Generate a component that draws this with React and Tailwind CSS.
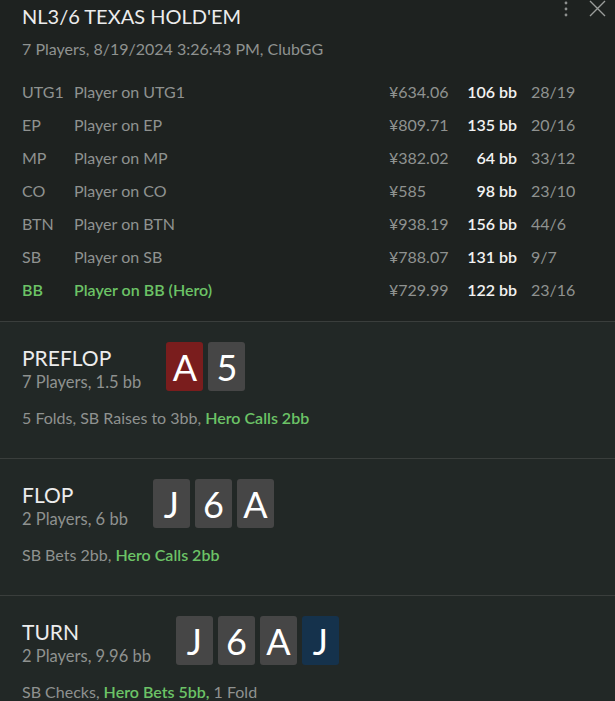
import React from "react";

const players = [
  { pos: "UTG1", name: "Player on UTG1", money: "¥634.06", bb: "106 bb", stats: "28/19" },
  { pos: "EP", name: "Player on EP", money: "¥809.71", bb: "135 bb", stats: "20/16" },
  { pos: "MP", name: "Player on MP", money: "¥382.02", bb: "64 bb", stats: "33/12" },
  { pos: "CO", name: "Player on CO", money: "¥585", bb: "98 bb", stats: "23/10" },
  { pos: "BTN", name: "Player on BTN", money: "¥938.19", bb: "156 bb", stats: "44/6" },
  { pos: "SB", name: "Player on SB", money: "¥788.07", bb: "131 bb", stats: "9/7" },
  { pos: "BB", name: "Player on BB (Hero)", money: "¥729.99", bb: "122 bb", stats: "23/16", hero: true },
];

const cardColors = {
  gray: "bg-[#464646]",
  red: "bg-[#7a1d1d]",
  blue: "bg-[#15324c]",
};

const Card = ({ rank, color = "gray" }) => (
  <div
    className={`${cardColors[color]} w-[37px] h-[49px] rounded-[3px] flex items-center justify-center text-[36px] text-white leading-none`}
  >
    {rank}
  </div>
);

const Street = ({ title, sub, cards, children }) => (
  <div className="border-t border-[#3a3e3c] bg-[#222826] h-[137px] px-[22px]">
    <div className="flex items-start gap-[25px] pt-[20px]">
      <div className="pt-[4px]">
        <div className="text-[21px] leading-[24px] text-[#ececec]">{title}</div>
        <div className="mt-[1px] text-[16.5px] leading-[22px] text-[#8f9290]">{sub}</div>
      </div>
      <div className="flex gap-[5px]">
        {cards.map((c, i) => (
          <Card key={i} rank={c.rank} color={c.color} />
        ))}
      </div>
    </div>
    <div className="mt-[14px] text-[16px] leading-[22px] text-[#8f9290]">{children}</div>
  </div>
);

const Hero = ({ children }) => (
  <span className="text-[#6cc366] font-semibold">{children}</span>
);

export default function App() {
  return (
    <div
      className="w-[615px] h-[701px] overflow-hidden bg-[#1e2220] relative"
      style={{ fontFamily: "Lato, 'Noto Sans', sans-serif" }}
    >
      <div className="absolute top-0 right-[9px] flex items-start gap-[20px]">
        <svg width="6" height="18" viewBox="0 0 6 18">
          <circle cx="3" cy="3" r="1.4" fill="#8d908e" />
          <circle cx="3" cy="9" r="1.4" fill="#8d908e" />
          <circle cx="3" cy="15" r="1.4" fill="#8d908e" />
        </svg>
        <svg width="17" height="18" viewBox="0 0 17 18">
          <path d="M1 1 L16 16 M16 1 L1 16" stroke="#9a9d9b" strokeWidth="1.4" />
        </svg>
      </div>

      <div className="px-[22px] pt-[3px]">
        <div className="text-[20px] leading-[26px] text-[#ececec]">NL3/6 TEXAS HOLD'EM</div>
        <div className="mt-[10px] text-[16px] leading-[20px] text-[#8f9290]">
          7 Players, 8/19/2024 3:26:43 PM, ClubGG
        </div>
        <div className="mt-[16px] pb-[15px]">
          {players.map((p) => (
            <div key={p.pos} className="flex items-center h-[33px] text-[16px]">
              <div
                className={`w-[52px] ${p.hero ? "text-[#6cc366] font-semibold" : "text-[#8f9290]"}`}
              >
                {p.pos}
              </div>
              <div
                className={`w-[315px] ${p.hero ? "text-[#6cc366] font-semibold" : "text-[#8f9290]"}`}
              >
                {p.name}
              </div>
              <div className="w-[75px] text-[#8f9290]">{p.money}</div>
              <div className="w-[53px] text-right text-[#f2f2f2] font-semibold">{p.bb}</div>
              <div className="w-[48px] ml-[14px] text-[#8f9290]">{p.stats}</div>
            </div>
          ))}
        </div>
      </div>

      <Street
        title="PREFLOP"
        sub="7 Players, 1.5 bb"
        cards={[
          { rank: "A", color: "red" },
          { rank: "5", color: "gray" },
        ]}
      >
        5 Folds, SB Raises to 3bb, <Hero>Hero Calls 2bb</Hero>
      </Street>
      <Street
        title="FLOP"
        sub="2 Players, 6 bb"
        cards={[{ rank: "J" }, { rank: "6" }, { rank: "A" }]}
      >
        SB Bets 2bb, <Hero>Hero Calls 2bb</Hero>
      </Street>
      <Street
        title="TURN"
        sub="2 Players, 9.96 bb"
        cards={[{ rank: "J" }, { rank: "6" }, { rank: "A" }, { rank: "J", color: "blue" }]}
      >
        SB Checks, <Hero>Hero Bets 5bb,</Hero> 1 Fold
      </Street>
    </div>
  );
}
